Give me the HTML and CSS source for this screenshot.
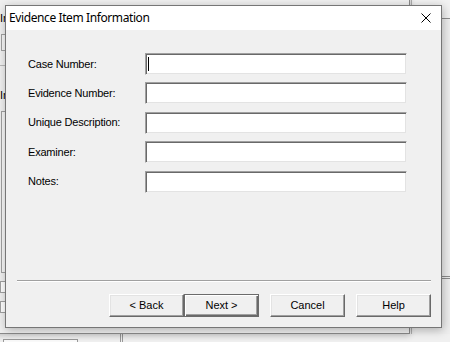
FILE: index.html
```html
<!DOCTYPE html>
<html>
<head>
<meta charset="utf-8">
<link rel="stylesheet" href="styles.css">
</head>
<body>
<div class="desk">
  <div class="farwin">
    <div class="far-box"></div>
    <div class="far-split"></div>
  </div>
  <div class="rightwin">
    <div class="rw-title"></div>
    <div class="rw-body"></div>
    <div class="rw-line"></div>
  </div>
  <div class="backwin">
    <div class="bw-label">Ir</div>
    <div class="bw-box"></div>
    <div class="bw-rule"></div>
    <div class="bw-label bw-label2">Ir</div>
    <div class="bw-box bw-box2"></div>
    <div class="bw-small"><span class="bw-dot"></span></div>
    <div class="bw-small bw-small2"></div>
  </div>
  <div class="dialog">
    <div class="titlebar">
      <span class="title">Evidence Item Information</span>
      <svg class="close" width="10" height="10" viewBox="0 0 10 10"><path d="M0.5 0.5 L9.5 9.5 M9.5 0.5 L0.5 9.5" stroke="#000" stroke-width="1" fill="none"/></svg>
    </div>
    <div class="client">
      <div class="form">
        <label class="lbl">Case Number:</label>
        <div class="field"><span class="caret"></span></div>
        <label class="lbl">Evidence Number:</label>
        <div class="field"></div>
        <label class="lbl">Unique Description:</label>
        <div class="field"></div>
        <label class="lbl">Examiner:</label>
        <div class="field"></div>
        <label class="lbl">Notes:</label>
        <div class="field"></div>
      </div>
      <div class="footer">
        <div class="sep"></div>
        <div class="buttons">
          <button class="btn">&lt; Back</button>
          <button class="btn btn-default">Next &gt;</button>
          <button class="btn btn-gap">Cancel</button>
          <button class="btn btn-gap">Help</button>
        </div>
      </div>
    </div>
  </div>
</div>
</body>
</html>
```

FILE: styles.css
```css
html, body {
  margin: 0;
  padding: 0;
}
body {
  width: 450px;
  height: 342px;
  overflow: hidden;
  background: #f0f0f0;
  font-family: "Liberation Sans", Arial, sans-serif;
}
.desk {
  position: relative;
  width: 450px;
  height: 342px;
  overflow: hidden;
  background: #ececec;
}

/* window furthest behind (bottom strip) */
.farwin {
  position: absolute;
  left: -20px;
  top: 300px;
  width: 480px;
  height: 60px;
  background: #f0f0f0;
}
.far-box {
  position: absolute;
  left: 23px;
  top: 39px;
  width: 73px;
  height: 20px;
  border: 1px solid #9a9a9a;
  background: #fafafa;
}
.far-split {
  position: absolute;
  left: 140px;
  top: 0;
  width: 1px;
  height: 60px;
  border-left: 1px solid #9a9a9a;
  border-right: 1px solid #9a9a9a;
}

/* window at the right, behind */
.rightwin {
  position: absolute;
  left: 411px;
  top: -6px;
  width: 60px;
  height: 340px;
  background: #eeeeee;
  border-left: 1px solid #b4b4b4;
}
.rw-title {
  height: 24px;
  border-bottom: 1px solid #8c8c8c;
  background: #f2f2f2;
}
.rw-body {
  height: 257px;
}
.rw-line {
  height: 1px;
  border-top: 1px solid #8c8c8c;
  border-bottom: 1px solid #8c8c8c;
}

/* window behind the dialog */
.backwin {
  position: absolute;
  left: -14px;
  top: -10px;
  width: 424px;
  height: 344px;
  background: #f0f0f0;
  border: 1px solid #8a8a8a;
  box-shadow: 0 2px 6px rgba(0,0,0,0.18);
  box-sizing: border-box;
  padding-top: 20px;
  padding-left: 13px;
}
.bw-label {
  width: 8px;
  white-space: nowrap;
  font-size: 11px;
  line-height: 14px;
  color: #000;
}
.bw-box {
  margin-top: 9px;
  margin-left: 1px;
  height: 15px;
  border: 1px solid #a0a0a0;
  background: #f7f7f7;
}
.bw-rule {
  margin-top: 14px;
  height: 1px;
  border-top: 1px solid #b9b9b9;
}
.bw-label2 {
  margin-top: 21px;
}
.bw-box2 {
  margin-top: 9px;
  height: 160px;
}
.bw-small {
  margin-top: 8px;
  width: 30px;
  height: 10px;
  border: 1px solid #a0a0a0;
  background: #fff;
  position: relative;
}
.bw-dot {
  position: absolute;
  left: 12px;
  top: 3px;
  width: 5px;
  height: 4px;
  background: #000;
}
.bw-small2 {
  margin-top: 8px;
}

/* dialog */
.dialog {
  position: absolute;
  left: 5px;
  top: 5px;
  width: 437px;
  height: 323px;
  box-sizing: border-box;
  border: 1px solid #767676;
  background: #f0f0f0;
  box-shadow: 1px 2px 9px rgba(0,0,0,0.28);
  display: flex;
  flex-direction: column;
}
.titlebar {
  height: 24px;
  flex: none;
  background: #ffffff;
  display: flex;
  align-items: center;
  padding-left: 3px;
  padding-right: 10px;
}
.title {
  flex: 1;
  font-family: "Noto Sans", "Open Sans", sans-serif;
  font-size: 12px;
  color: #000;
  letter-spacing: -0.4px;
  margin-top: -1px;
}
.close {
  display: block;
}
.client {
  flex: 1;
  display: flex;
  flex-direction: column;
  padding: 23px 10px 10px 11px;
}
.form {
  display: grid;
  grid-template-columns: 117px 262px;
  grid-auto-rows: 22px;
  row-gap: 7.4px;
  padding-left: 11px;
  align-items: center;
}
.lbl {
  font-size: 11px;
  color: #000;
  line-height: 13px;
  letter-spacing: -0.2px;
}
.field {
  height: 22px;
  box-sizing: border-box;
  background: #fff;
  border-top: 1px solid #a0a0a0;
  border-left: 1px solid #a0a0a0;
  border-bottom: 1px solid #f0f0f0;
  border-right: 1px solid #f0f0f0;
  box-shadow: inset 1px 1px 0 #696969, inset -1px -1px 0 #e3e3e3;
  position: relative;
}
.caret {
  position: absolute;
  left: 2px;
  top: 3px;
  width: 1px;
  height: 14px;
  background: #000;
}
.footer {
  margin-top: auto;
}
.sep {
  height: 0;
  border-top: 1px solid #a0a0a0;
  border-bottom: 1px solid #ffffff;
  margin-bottom: 12px;
}
.buttons {
  display: flex;
  justify-content: flex-end;
}
.btn {
  width: 75px;
  height: 23px;
  box-sizing: border-box;
  margin: 0;
  padding: 0;
  font-family: "Liberation Sans", Arial, sans-serif;
  font-size: 11px;
  color: #000;
  background: #f0f0f0;
  border-top: 1px solid #ffffff;
  border-left: 1px solid #ffffff;
  border-right: 1px solid #696969;
  border-bottom: 1px solid #696969;
  box-shadow: inset -1px -1px 0 #a0a0a0, inset 1px 1px 0 #e3e3e3;
  border-radius: 0;
  text-align: center;
  line-height: 21px;
}
.btn-default {
  border: 1px solid #6b6b6b;
  box-shadow: inset 1px 1px 0 #fff, inset -1px -1px 0 #696969, inset -2px -2px 0 #a0a0a0;
}
.btn-gap {
  margin-left: 11px;
}
```
